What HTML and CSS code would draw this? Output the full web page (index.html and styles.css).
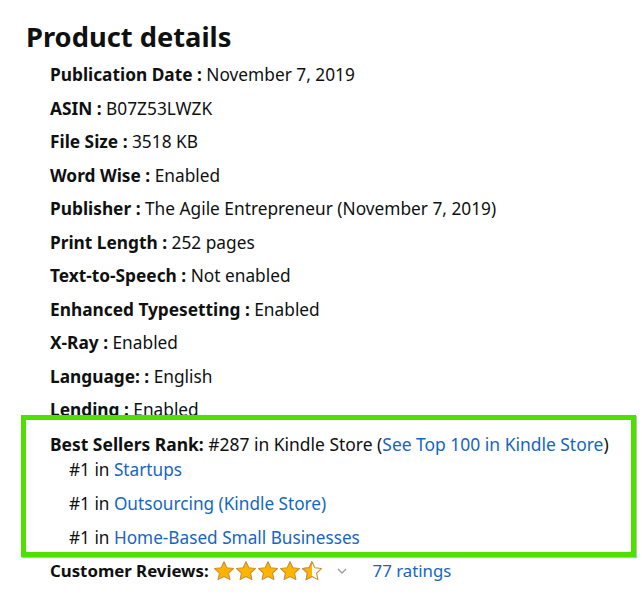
FILE: index.html
```html
<!DOCTYPE html>
<html lang="en">
<head>
<meta charset="utf-8">
<title>Product details</title>
<link rel="stylesheet" href="styles.css">
</head>
<body>
<div class="page">
  <h2 class="title">Product details</h2>
  <ul class="details">
    <li class="row"><span class="label">Publication Date : </span><span>November 7, 2019</span></li>
    <li class="row"><span class="label">ASIN : </span><span>B07Z53LWZK</span></li>
    <li class="row"><span class="label">File Size : </span><span>3518 KB</span></li>
    <li class="row"><span class="label">Word Wise : </span><span>Enabled</span></li>
    <li class="row"><span class="label">Publisher : </span><span>The Agile Entrepreneur (November 7, 2019)</span></li>
    <li class="row"><span class="label">Print Length : </span><span>252 pages</span></li>
    <li class="row"><span class="label">Text-to-Speech : </span><span>Not enabled</span></li>
    <li class="row"><span class="label">Enhanced Typesetting : </span><span>Enabled</span></li>
    <li class="row"><span class="label">X-Ray : </span><span>Enabled</span></li>
    <li class="row"><span class="label">Language: : </span><span>English</span></li>
    <li class="row"><span class="label">Lending : </span><span>Enabled</span></li>
  </ul>
  <div class="rank">
    <div class="highlight"></div>
    <div class="row rank-main"><span class="label">Best Sellers Rank:</span> #287 in Kindle Store (<a class="link" href="#">See Top 100 in Kindle Store</a>)</div>
    <ul class="rank-list">
      <li class="rank-item">#1 in <a class="link" href="#">Startups</a></li>
      <li class="rank-item">#1 in <a class="link" href="#">Outsourcing (Kindle Store)</a></li>
      <li class="rank-item">#1 in <a class="link" href="#">Home-Based Small Businesses</a></li>
    </ul>
  </div>
  <div class="row reviews">
    <span class="label">Customer Reviews:</span>
    <span class="stars">
      <svg class="star" viewBox="0 0 24 24"><path class="star-fill" d="M12 1.8l3.1 6.6 7.2.9-5.3 5 1.4 7.1L12 17.9l-6.4 3.5L7 14.3l-5.3-5 7.2-.9z"/></svg>
      <svg class="star" viewBox="0 0 24 24"><path class="star-fill" d="M12 1.8l3.1 6.6 7.2.9-5.3 5 1.4 7.1L12 17.9l-6.4 3.5L7 14.3l-5.3-5 7.2-.9z"/></svg>
      <svg class="star" viewBox="0 0 24 24"><path class="star-fill" d="M12 1.8l3.1 6.6 7.2.9-5.3 5 1.4 7.1L12 17.9l-6.4 3.5L7 14.3l-5.3-5 7.2-.9z"/></svg>
      <svg class="star" viewBox="0 0 24 24"><path class="star-fill" d="M12 1.8l3.1 6.6 7.2.9-5.3 5 1.4 7.1L12 17.9l-6.4 3.5L7 14.3l-5.3-5 7.2-.9z"/></svg>
      <svg class="star" viewBox="0 0 24 24"><defs><clipPath id="half"><rect x="0" y="0" width="12" height="24"/></clipPath></defs><path class="star-empty" d="M12 1.8l3.1 6.6 7.2.9-5.3 5 1.4 7.1L12 17.9l-6.4 3.5L7 14.3l-5.3-5 7.2-.9z"/><path class="star-fill" clip-path="url(#half)" d="M12 1.8l3.1 6.6 7.2.9-5.3 5 1.4 7.1L12 17.9l-6.4 3.5L7 14.3l-5.3-5 7.2-.9z"/></svg>
    </span>
    <svg class="chevron" viewBox="0 0 10 6"><path d="M1 1l4 4 4-4" fill="none" stroke="#999" stroke-width="1.3"/></svg>
    <a class="link ratings" href="#">77 ratings</a>
  </div>
</div>
</body>
</html>
```

FILE: styles.css
```css
html, body {
  margin: 0;
  padding: 0;
  background: #ffffff;
}
body {
  font-family: "Noto Sans", "Open Sans", sans-serif;
  color: #0f1111;
}
.page {
  padding: 20px 0 0 26px;
}
.title {
  margin: 0;
  font-size: 27.3px;
  line-height: 34px;
  font-weight: 700;
}
.details {
  list-style: none;
  margin: 11px 0 0 0;
  padding: 0 0 0 24px;
}
.row {
  font-size: 17.3px;
  line-height: 20px;
  margin-bottom: 13.5px;
}
.label {
  font-weight: 700;
}
.rank {
  position: relative;
  padding-left: 24px;
}
.highlight {
  position: absolute;
  left: -5px;
  right: 6px;
  top: -19px;
  height: 142px;
  box-sizing: border-box;
  border: 5px solid #4fe000;
  box-shadow: 1px 1px 1px rgba(0, 0, 0, 0.25);
  pointer-events: none;
}
.rank-main {
  margin-bottom: 6px;
  font-size: 17.45px;
}
.rank-list {
  list-style: none;
  margin: 0;
  padding: 0 0 0 19px;
}
.rank-item {
  font-size: 17.2px;
  line-height: 20px;
  margin-bottom: 14px;
}
.link {
  color: #1566c0;
  text-decoration: none;
}
.reviews {
  display: flex;
  align-items: center;
  padding-left: 24px;
  margin-top: -2px;
  font-size: 16.8px;
}
.stars {
  display: flex;
  margin-left: 4px;
}
.star {
  width: 22px;
  height: 22px;
}
.star-fill {
  fill: #ffb400;
  stroke: #c8903a;
  stroke-width: 1.2;
  stroke-linejoin: round;
}
.star-empty {
  fill: #ffffff;
  stroke: #c8903a;
  stroke-width: 1.2;
  stroke-linejoin: round;
}
.chevron {
  width: 10px;
  height: 6px;
  margin-left: 14px;
}
.ratings {
  margin-left: 26px;
}
```
